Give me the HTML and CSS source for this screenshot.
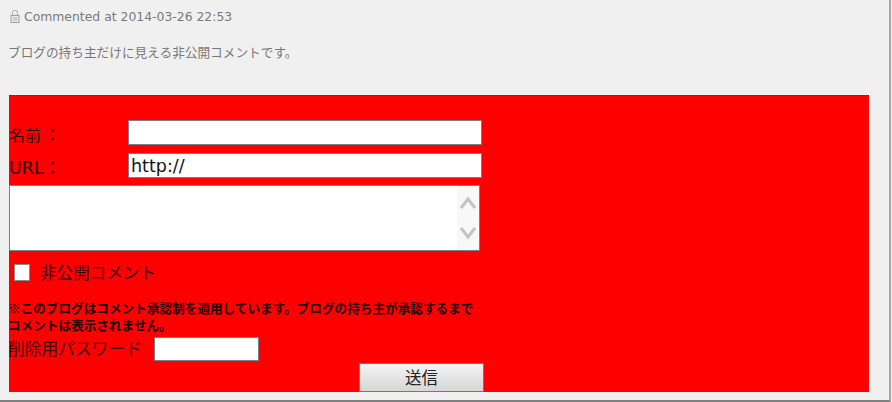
FILE: index.html
```html
<!DOCTYPE html>
<html lang="ja">
<head>
<meta charset="utf-8">
<title>Comment</title>
<link rel="stylesheet" href="styles.css">
</head>
<body>
<div class="frame">
  <p class="meta">
    <svg class="lock" width="10" height="13" viewBox="0 0 10 13"><path d="M2.5 6V2.5a2 2 0 0 1 2-2h1a2 2 0 0 1 2 2V6" fill="none" stroke="#a8a8a8" stroke-width="1"/><rect x="1" y="5.5" width="8" height="7" fill="#e8e8e8" stroke="#a0a0a0"/><path d="M3 8h4M3 10h4" stroke="#b0b0b0"/></svg>
    <span>Commented at 2014-03-26 22:53</span>
  </p>
  <p class="private">ブログの持ち主だけに見える非公開コメントです。</p>
  <form class="panel">
    <div class="row row-name"><label class="label">名前 ：</label><input class="field" type="text"></div>
    <div class="row row-url"><label class="label">URL：</label><input class="field" type="text" value="http://"></div>
    <div class="area-wrap">
      <textarea class="area"></textarea>
      <div class="scroll">
        <svg width="22" height="64" viewBox="0 0 22 64"><path d="M4 22 11 13l7 9" fill="none" stroke="#c4c4c4" stroke-width="3"/><path d="M4 42l7 9 7-9" fill="none" stroke="#c4c4c4" stroke-width="3"/></svg>
      </div>
    </div>
    <label class="check-row"><input class="check" type="checkbox"><span>非公開コメント</span></label>
    <p class="note">※このブログはコメント承認制を適用しています。ブログの持ち主が承認するまでコメントは表示されません。</p>
    <div class="row-pass"><label class="pass-label">削除用パスワード</label><input class="pass" type="password"></div>
    <div class="submit-row"><button class="submit" type="button">送信</button></div>
  </form>
</div>
</body>
</html>
```
FILE: styles.css
```css
* { box-sizing: border-box; }
html, body { margin: 0; padding: 0; }
body {
  width: 892px;
  height: 402px;
  overflow: hidden;
  background: #f0f0f0;
  font-family: "Noto Sans CJK JP", "Noto Sans", sans-serif;
  color: #777;
}
.frame {
  width: 891px;
  height: 402px;
  padding: 3px 0 0 9px;
  border-right: 2px solid #a6a6a6;
  border-bottom: 2px solid #808080;
  background: #f0f0f0;
}
.meta {
  margin: 0;
  height: 26px;
  display: flex;
  align-items: center;
  gap: 4px;
  padding-left: 1px;
  font-family: "DejaVu Sans", sans-serif;
  font-size: 12.4px;
  color: #7a7a7a;
}
.private {
  margin: 0 0 0 -1px;
  padding-top: 13px;
  height: 66px;
  font-size: 12.67px;
  line-height: 20px;
  color: #777;
}
.panel {
  width: 860px;
  height: 297px;
  background: #f00;
  border-top: 1px dotted #b00;
  color: #300;
  padding-top: 24px;
}
.row { display: flex; align-items: center; height: 25px; }
.row-url { margin-top: 8px; }
.label { width: 119px; font-size: 16px; line-height: 29px; height: 25px; flex: none; }
.row-url .label { font-family: "DejaVu Sans", "Noto Sans CJK JP", sans-serif; font-size: 17.5px; line-height: 30px; }
.field {
  width: 354px;
  height: 25px;
  padding: 1px 2px 0;
  border: 1px solid #7c7c8c;
  background: #fff;
  border-radius: 0;
  font-family: "DejaVu Sans", sans-serif;
  font-size: 17.5px;
  color: #111;
  outline: 0;
}
.area-wrap {
  position: relative;
  width: 471px;
  height: 66px;
  margin-top: 7px;
}
.area {
  display: block;
  width: 471px;
  height: 66px;
  border: 1px solid #7c7c8c;
  border-radius: 0;
  background: #fff;
  resize: none;
  outline: 0;
}
.scroll {
  position: absolute;
  top: 1px;
  right: 1px;
  width: 22px;
  height: 64px;
  background: #f8f8f8;
}
.scroll svg { display: block; }
.check-row {
  display: flex;
  align-items: center;
  height: 20px;
  margin-top: 11px;
  padding-left: 5px;
  font-size: 16.6px;
  line-height: 20px;
}
.check {
  appearance: none;
  width: 16px;
  height: 17px;
  margin: 0 10px 0 0;
  background: #fff;
  border: 1px solid #8a8a8a;
  flex: none;
}
.note {
  margin: 17px 0 0 -1px;
  width: 478px;
  font-size: 12.63px;
  font-weight: 700;
  line-height: 17px;
  color: #200;
}
.row-pass {
  display: flex;
  align-items: center;
  height: 24px;
  margin-top: 4px;
}
.pass-label { width: 145px; margin-left: -1px; margin-right: 1px; font-size: 16.75px; line-height: 23px; height: 24px; flex: none; color: #400; }
.pass {
  width: 105px;
  height: 24px;
  border: 1px solid #7c7c8c;
  border-radius: 0;
  background: #fff;
  outline: 0;
}
.submit-row { width: 475px; display: flex; justify-content: flex-end; margin-top: 2px; }
.submit {
  width: 125px;
  height: 29px;
  padding: 0;
  border: 1px solid #8a7070;
  border-radius: 0;
  background: linear-gradient(#f4f4f4, #d6d6d6);
  font-family: "Noto Sans CJK JP", sans-serif;
  font-size: 16.5px;
  line-height: 27px;
  color: #222;
}
```
